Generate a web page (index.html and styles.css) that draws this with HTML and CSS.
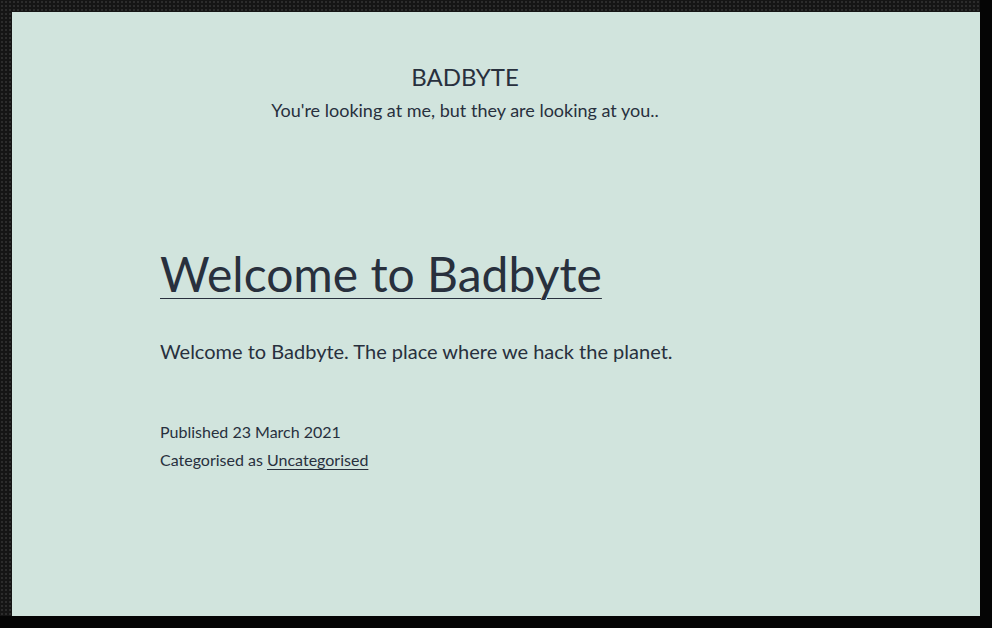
FILE: index.html
```html
<!DOCTYPE html>
<html lang="en">
<head>
<meta charset="utf-8">
<title>Badbyte</title>
<link rel="stylesheet" href="styles.css">
</head>
<body>
<div class="frame">
  <div class="panel">
    <header class="site-header">
      <p class="site-title">BADBYTE</p>
      <p class="site-desc">You're looking at me, but they are looking at you..</p>
    </header>
    <main class="content">
      <article class="post">
        <h1 class="post-title"><a href="#">Welcome to Badbyte</a></h1>
        <p class="post-body">Welcome to Badbyte. The place where we hack the planet.</p>
        <footer class="post-meta">
          <p class="meta-line">Published 23 March 2021</p>
          <p class="meta-line">Categorised as <a href="#">Uncategorised</a></p>
        </footer>
      </article>
    </main>
  </div>
</div>
</body>
</html>
```
FILE: styles.css
```css
html, body {
  margin: 0;
  padding: 0;
  height: 100%;
  background: #050505;
}
.frame {
  box-sizing: border-box;
  width: 992px;
  height: 628px;
  padding: 12px 0 0 12px;
  border-right: 12px solid #050505;
  border-bottom: 12px solid #050505;
  background-color: #151515;
  background-image: radial-gradient(circle, #2c2c2c 0.9px, transparent 1.2px);
  background-size: 4px 4px;
}
.panel {
  height: 100%;
  background: #d1e4dd;
  color: #28303d;
  font-family: Lato, "Open Sans", sans-serif;
  display: flex;
  flex-direction: column;
}
.site-header {
  width: 906px;
  padding-top: 50px;
  text-align: center;
}
.site-title {
  margin: 0;
  font-size: 24px;
  line-height: 30px;
}
.site-desc {
  margin: 3px 0 0;
  font-size: 18px;
  line-height: 30px;
}
.content {
  padding: 119px 0 0 148px;
}
.post-title {
  margin: 0;
  font-weight: 400;
  font-size: 48px;
  line-height: 60px;
}
.post-title a {
  color: #28303d;
  text-decoration: underline;
  text-decoration-thickness: 1px;
  text-underline-offset: 6px;
}
.post-body {
  margin: 32px 0 0;
  font-size: 20px;
  line-height: 30px;
}
.post-meta {
  margin-top: 52px;
}
.meta-line {
  margin: 0;
  font-size: 16px;
  line-height: 28px;
}
.meta-line a {
  color: #28303d;
  text-decoration: underline;
  text-decoration-thickness: 1px;
  text-underline-offset: 3px;
}
```
